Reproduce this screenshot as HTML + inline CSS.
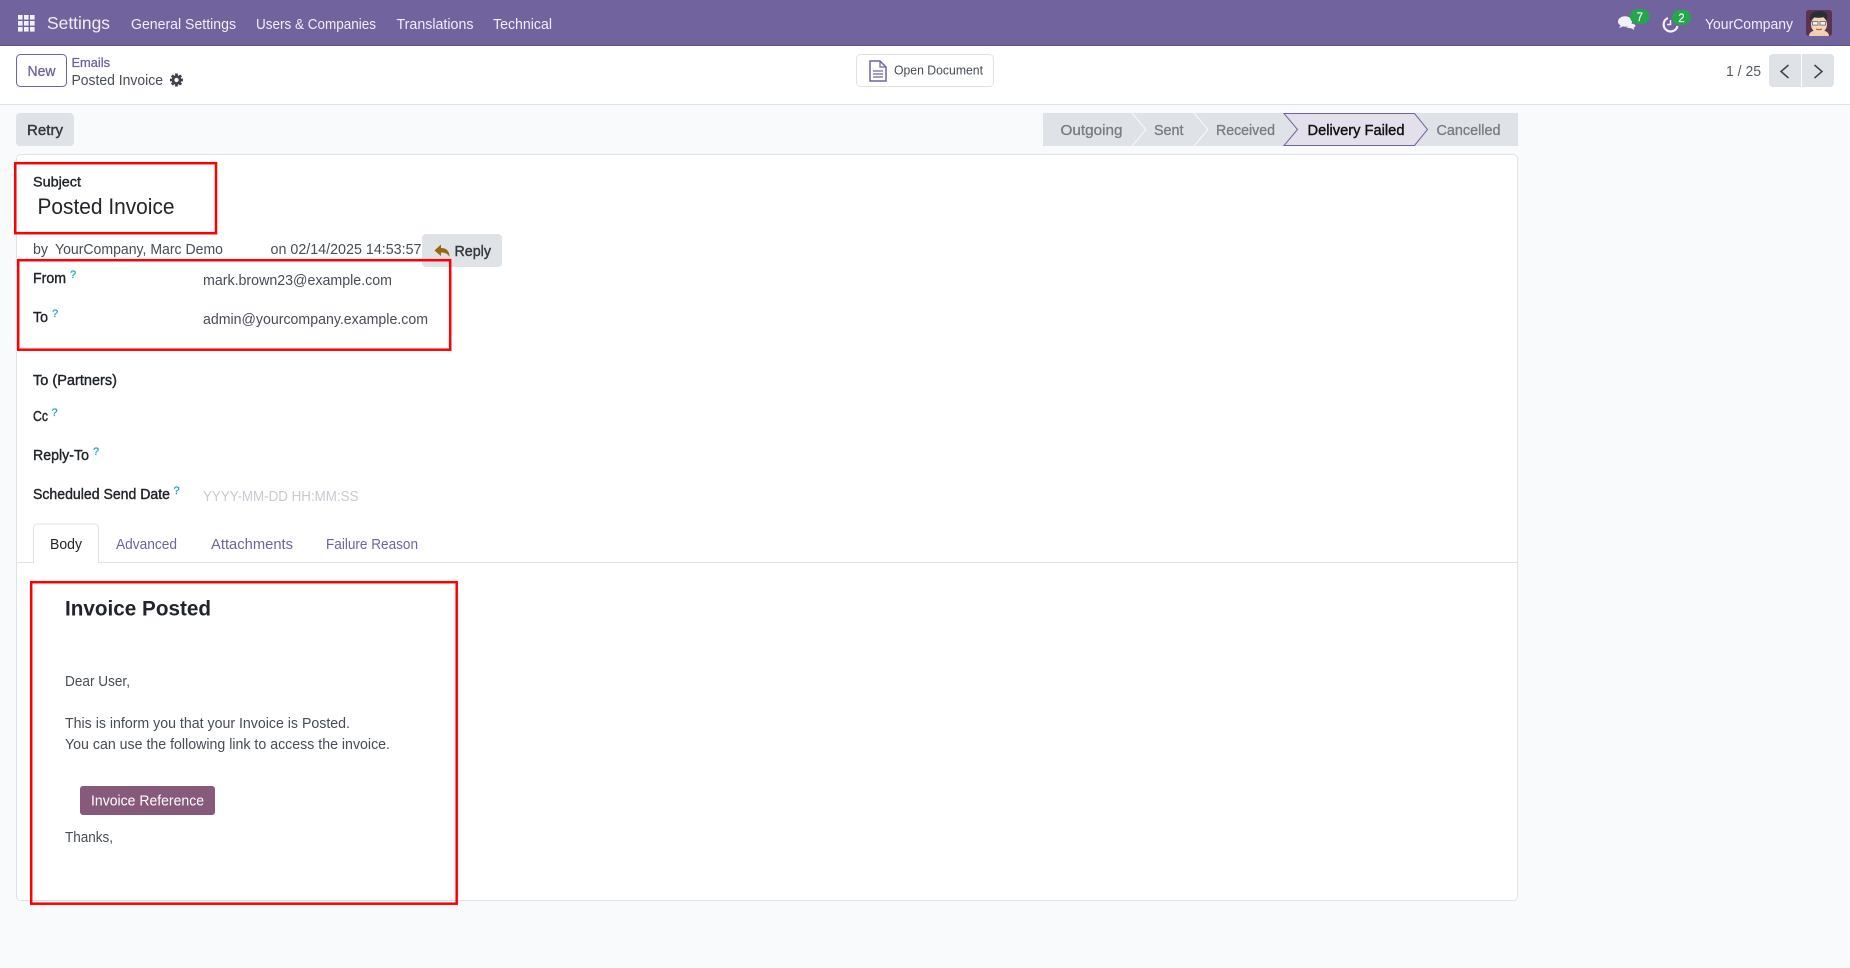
<!DOCTYPE html>
<html lang="en"><head><meta charset="utf-8"><title>Posted Invoice</title>
<style>
html,body{margin:0;padding:0;width:1850px;height:968px;overflow:hidden;background:#f9fafb}
svg{display:block}
text{font-family:"Liberation Sans",sans-serif;font-size:14.5px;fill:#474d55}
.n{fill:#f0eef6}
.l{fill:#1f2328;stroke:#1f2328;stroke-width:.4px}
.p{fill:#71639e}
.s{fill:#777c82;stroke:#777c82;stroke-width:.3px}
.q{font-size:11px;fill:#17a2b8;stroke:#17a2b8;stroke-width:.2px}
</style></head>
<body>
<svg width="1850" height="968" viewBox="0 0 1850 968" xmlns="http://www.w3.org/2000/svg">
<rect width="1850" height="968" fill="#f9fafb"/>
<!-- navbar -->
<rect width="1850" height="46" fill="#71639e"/>
<rect y="45" width="1850" height="1" fill="#5f5387"/>
<g fill="#f3f1f8">
<rect x="18" y="15" width="4.600" height="4.600"/><rect x="24" y="15" width="4.600" height="4.600"/><rect x="30" y="15" width="4.600" height="4.600"/>
<rect x="18" y="21" width="4.600" height="4.600"/><rect x="24" y="21" width="4.600" height="4.600"/><rect x="30" y="21" width="4.600" height="4.600"/>
<rect x="18" y="27" width="4.600" height="4.600"/><rect x="24" y="27" width="4.600" height="4.600"/><rect x="30" y="27" width="4.600" height="4.600"/>
</g>
<text x="47" y="29" class="n" style="font-size:17.5px" textLength="63" lengthAdjust="spacingAndGlyphs">Settings</text>
<text x="131" y="29" class="n" textLength="105" lengthAdjust="spacingAndGlyphs">General Settings</text>
<text x="256" y="29" class="n" textLength="120" lengthAdjust="spacingAndGlyphs">Users &amp; Companies</text>
<text x="396.500" y="29" class="n" textLength="77" lengthAdjust="spacingAndGlyphs">Translations</text>
<text x="493" y="29" class="n" textLength="59" lengthAdjust="spacingAndGlyphs">Technical</text>
<!-- systray -->
<ellipse cx="1625" cy="21.500" rx="7" ry="5.200" fill="#f3f1f8"/>
<path d="M1621 25l-2 3 5-2z" fill="#f3f1f8"/>
<path d="M1630 23.500c3 0 5.500 1 5.500 2.300 0 1-1 1.600-2 2l1 2.200-3.500-1.800c-2 0-4-.3-5-1.200 2-.2 3.500-1.800 4-3.500z" fill="#f3f1f8"/>
<rect x="1630" y="9" width="19.500" height="15" rx="7.500" fill="#22a74a"/>
<text x="1639.800" y="21" text-anchor="middle" style="font-size:11.500px;fill:#fff;stroke:#fff;stroke-width:.2px">7</text>
<path d="M1668 18a7 7 0 1 0 9.500 8" fill="none" stroke="#f3f1f8" stroke-width="2.200"/>
<path d="M1670.500 20v4.500h-3.500" fill="none" stroke="#f3f1f8" stroke-width="1.500"/>
<rect x="1672" y="10" width="19" height="15" rx="7.500" fill="#22a74a"/>
<text x="1681.500" y="22" text-anchor="middle" style="font-size:11.500px;fill:#fff;stroke:#fff;stroke-width:.2px">2</text>
<text x="1705" y="29" class="n" textLength="88" lengthAdjust="spacingAndGlyphs">YourCompany</text>
<!-- avatar -->
<rect x="1806" y="10" width="26" height="26" rx="3" fill="#5a3350"/>
<path d="M1809 36c0-4 4-6 10-6s10 2 10 6z" fill="#f2cdb0"/>
<ellipse cx="1819" cy="24.500" rx="8" ry="8.500" fill="#f5d5ba"/>
<path d="M1810 21c-1-5 1-9 5-9 2-1.500 9-1.500 11 1 2 2 1.500 5 .5 8-1-2-2-4-3-4-3 1-7 1-10 0-1 1-2.500 2-3.500 4z" fill="#2a2d32"/>
<rect x="1812.500" y="21.500" width="5.500" height="3.600" fill="#f0f0f0" stroke="#666" stroke-width=".8"/>
<rect x="1820" y="21.500" width="5.500" height="3.600" fill="#f0f0f0" stroke="#666" stroke-width=".8"/>
<path d="M1816 29c2 1 4 1 6 0" stroke="#a05a48" fill="none"/>
<!-- control panel -->
<rect y="46" width="1850" height="58" fill="#fff"/>
<rect y="104" width="1850" height="1" fill="#dfe3e8"/>
<rect x="16.500" y="54.500" width="50" height="32" rx="4" fill="#fff" stroke="#71639e"/>
<text x="27.500" y="76" class="p" textLength="28" lengthAdjust="spacingAndGlyphs" style="stroke:#71639e;stroke-width:.3px">New</text>
<text x="71.500" y="67" class="p" style="font-size:13px;stroke:#71639e;stroke-width:.3px" textLength="38.500" lengthAdjust="spacingAndGlyphs">Emails</text>
<text x="71.500" y="85" textLength="91.500" lengthAdjust="spacingAndGlyphs">Posted Invoice</text>
<g transform="translate(176.500 80)" fill="#3e444b">
<rect x="-1.400" y="-6.500" width="2.800" height="13"/>
<rect x="-1.400" y="-6.500" width="2.800" height="13" transform="rotate(45)"/>
<rect x="-1.400" y="-6.500" width="2.800" height="13" transform="rotate(90)"/>
<rect x="-1.400" y="-6.500" width="2.800" height="13" transform="rotate(135)"/>
<circle r="4.800"/>
<circle r="2.100" fill="#fff"/>
</g>
<rect x="856.500" y="54.500" width="137" height="32" rx="4" fill="#fff" stroke="#dfe3e8"/>
<path d="M870 61h10l6 6v14h-16z" fill="#fff" stroke="#71639e" stroke-width="1.500"/>
<path d="M880 61v6h6" fill="none" stroke="#71639e" stroke-width="1.200"/>
<path d="M873 71h10M873 74h10M873 77h10" stroke="#71639e" stroke-width="1.300"/>
<text x="894" y="74.500" style="font-size:12.500px" textLength="89" lengthAdjust="spacingAndGlyphs">Open Document</text>
<text x="1726" y="76" textLength="35" lengthAdjust="spacingAndGlyphs" style="fill:#555b62">1 / 25</text>
<path d="M1769 58a4 4 0 0 1 4-4h28v33h-28a4 4 0 0 1-4-4z" fill="#dfe2e6"/>
<path d="M1802 54h28a4 4 0 0 1 4 4v25a4 4 0 0 1-4 4h-28z" fill="#dfe2e6"/>
<path d="M1788.500 65l-7.500 6.500 7.500 6.500" fill="none" stroke="#3e444b" stroke-width="1.500"/>
<path d="M1814.500 65l7.500 6.500-7.500 6.500" fill="none" stroke="#3e444b" stroke-width="1.500"/>
<!-- action row -->
<rect x="16" y="113" width="58" height="33" rx="4" fill="#dfe2e6"/>
<text x="27" y="135" class="l" textLength="36" lengthAdjust="spacingAndGlyphs" style="fill:#33383d;stroke:#33383d">Retry</text>
<rect x="1043" y="113" width="475" height="33" fill="#dfe2e6"/>
<path d="M1132 113l14 16.500-14 16.500M1194 113l14 16.500-14 16.500" fill="none" stroke="#f9fafb" stroke-width="1"/>
<path d="M1284 113.500h130.500l13 16-13 16H1284l13.500-16z" fill="#e3e0ec" stroke="#71639e"/>
<text x="1060.500" y="135" class="s" textLength="62" lengthAdjust="spacingAndGlyphs">Outgoing</text>
<text x="1154" y="135" class="s" textLength="29.500" lengthAdjust="spacingAndGlyphs">Sent</text>
<text x="1216" y="135" class="s" textLength="59" lengthAdjust="spacingAndGlyphs">Received</text>
<text x="1307.500" y="135" textLength="97" lengthAdjust="spacingAndGlyphs" style="fill:#111;stroke:#111;stroke-width:.4px">Delivery Failed</text>
<text x="1436.500" y="135" class="s" textLength="64" lengthAdjust="spacingAndGlyphs">Cancelled</text>
<!-- sheet -->
<rect x="16.500" y="154.500" width="1501" height="746" rx="4" fill="#fff" stroke="#dfe3e8"/>
<text x="33" y="186.500" class="l" style="font-size:14px" textLength="48" lengthAdjust="spacingAndGlyphs">Subject</text>
<text x="37.500" y="214" style="font-size:22px;fill:#212529" textLength="137" lengthAdjust="spacingAndGlyphs">Posted Invoice</text>
<text x="33" y="254" textLength="15" lengthAdjust="spacingAndGlyphs">by</text>
<text x="55" y="254" textLength="168" lengthAdjust="spacingAndGlyphs">YourCompany, Marc Demo</text>
<text x="270.500" y="254" textLength="151" lengthAdjust="spacingAndGlyphs">on 02/14/2025 14:53:57</text>
<rect x="422" y="234" width="80" height="33" rx="4" fill="#dfe2e6"/>
<path d="M434.500 250.500l6.500-6v3.500c5 0 8.500 2.500 8.500 9-1.500-3-4-4.500-8.500-4.500v3.500z" fill="#98680e"/>
<text x="454.500" y="256" class="l" textLength="36.500" lengthAdjust="spacingAndGlyphs" style="fill:#33383d;stroke:#33383d">Reply</text>
<text x="33" y="283" class="l" textLength="33" lengthAdjust="spacingAndGlyphs">From</text>
<text x="70" y="278" class="q">?</text>
<text x="203" y="285" textLength="189" lengthAdjust="spacingAndGlyphs">mark.brown23@example.com</text>
<text x="33" y="322" class="l" textLength="15" lengthAdjust="spacingAndGlyphs">To</text>
<text x="52" y="317" class="q">?</text>
<text x="203" y="324" textLength="225" lengthAdjust="spacingAndGlyphs">admin@yourcompany.example.com</text>
<text x="33" y="385" class="l" textLength="84" lengthAdjust="spacingAndGlyphs">To (Partners)</text>
<text x="33" y="421" class="l" textLength="15" lengthAdjust="spacingAndGlyphs">Cc</text>
<text x="51.500" y="416" class="q">?</text>
<text x="33" y="460" class="l" textLength="56" lengthAdjust="spacingAndGlyphs">Reply-To</text>
<text x="93" y="455" class="q">?</text>
<text x="33" y="499" class="l" textLength="137" lengthAdjust="spacingAndGlyphs">Scheduled Send Date</text>
<text x="173.500" y="494" class="q">?</text>
<text x="203" y="501" style="fill:#c6cbd1" textLength="155.500" lengthAdjust="spacingAndGlyphs">YYYY-MM-DD HH:MM:SS</text>
<!-- tabs -->
<rect x="17" y="562" width="1500" height="1" fill="#dfe3e8"/>
<path d="M33.500 563v-35a4 4 0 0 1 4-4h57a4 4 0 0 1 4 4v35" fill="#fff" stroke="#dfe3e8"/>
<rect x="34" y="561" width="64" height="3" fill="#fff"/>
<text x="50" y="549" style="fill:#212529" textLength="32" lengthAdjust="spacingAndGlyphs">Body</text>
<text x="116" y="549" class="p" textLength="61" lengthAdjust="spacingAndGlyphs">Advanced</text>
<text x="211" y="549" class="p" textLength="82" lengthAdjust="spacingAndGlyphs">Attachments</text>
<text x="326" y="549" class="p" textLength="92" lengthAdjust="spacingAndGlyphs">Failure Reason</text>
<!-- body -->
<text x="65" y="615.500" style="font-size:21px;font-weight:700;fill:#212529" textLength="146" lengthAdjust="spacingAndGlyphs">Invoice Posted</text>
<text x="65" y="686" textLength="65" lengthAdjust="spacingAndGlyphs">Dear User,</text>
<text x="65" y="728" textLength="285" lengthAdjust="spacingAndGlyphs">This is inform you that your Invoice is Posted.</text>
<text x="65" y="749" textLength="325" lengthAdjust="spacingAndGlyphs">You can use the following link to access the invoice.</text>
<rect x="80" y="786" width="135" height="29" rx="3" fill="#875a7b"/>
<text x="91" y="805.500" style="fill:#fff" textLength="113" lengthAdjust="spacingAndGlyphs">Invoice Reference</text>
<text x="65" y="842" textLength="48" lengthAdjust="spacingAndGlyphs">Thanks,</text>
<!-- red annotation boxes -->
<g fill="none" stroke="#f00" stroke-width="2.500">
<rect x="15.200" y="163.200" width="200.800" height="70"/>
<rect x="18.200" y="260.200" width="432" height="89.500"/>
<rect x="31.200" y="582.200" width="425.500" height="321.500"/>
</g>
</svg>
</body></html>
